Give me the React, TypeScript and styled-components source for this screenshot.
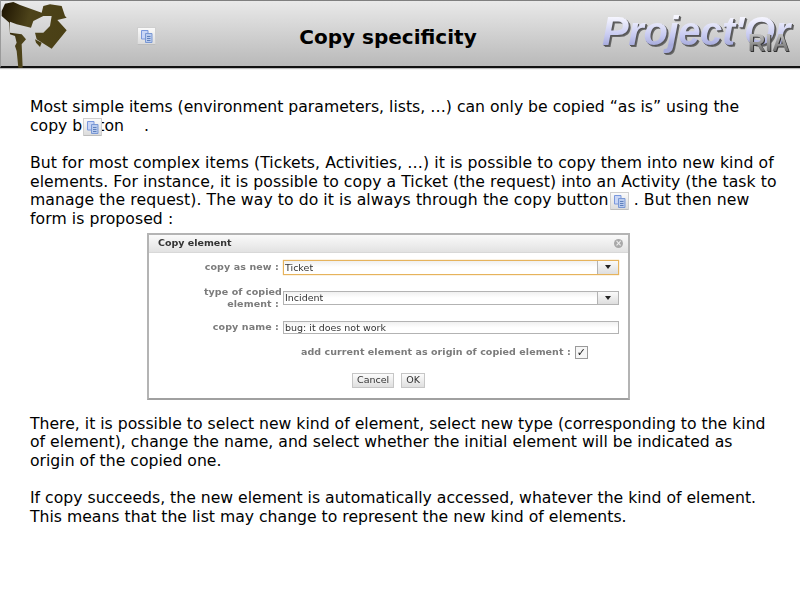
import React from "react";
import styled, { createGlobalStyle } from "styled-components";

const Global = createGlobalStyle`
  html, body { margin: 0; padding: 0; background: #fff; }
  body { font-family: "DejaVu Sans", Verdana, sans-serif; color: #000; }
`;

const Slide = styled.div`
  width: 800px;
  height: 600px;
  overflow: hidden;
  background: #fff;
`;

const Header = styled.header`
  height: 68px;
  box-sizing: border-box;
  display: flex;
  align-items: stretch;
  background: linear-gradient(#e9e9e9, #b9b9b9);
  border-top: 1px solid #7f7f7f;
  border-left: 1px solid #9a9a9a;
  border-bottom: 2px solid #111;
  box-shadow: 0 1px 1px #bbb;
`;

const LeftGroup = styled.div`
  width: 175px;
  display: flex;
  align-items: flex-start;
`;

const Spot = styled.svg`
  width: 70px;
  height: 67px;
  margin-left: -1px;
  flex: none;
`;

const HeaderTool = styled.div`
  margin: 26px 0 0 67px;
`;

const Title = styled.h1`
  flex: 1;
  margin: 0;
  padding-top: 24px;
  text-align: center;
  font: bold 20px/25px "DejaVu Sans", sans-serif;
  color: #000;
`;

const Brand = styled.div`
  position: relative;
  width: 200px;
  flex: none;
`;

const BrandName = styled.span`
  position: absolute;
  left: 2px;
  top: 7px;
  padding-right: 4px;
  font: italic bold 40px/46px "Liberation Sans", sans-serif;
  letter-spacing: -0.4px;
  white-space: nowrap;
  background: linear-gradient(#f6f6ff 20%, #c6c9f0 60%, #a9addd 80%);
  -webkit-background-clip: text;
  background-clip: text;
  color: transparent;
  filter: drop-shadow(1px 1px 0 #555) drop-shadow(1px 1px 0.5px #666);
`;

const BrandTag = styled.span`
  position: absolute;
  left: 148px;
  top: 28px;
  font: bold 24px/28px "Liberation Sans", sans-serif;
  background: linear-gradient(#bdbdbd 20%, #6d6d6d 80%);
  -webkit-background-clip: text;
  background-clip: text;
  color: transparent;
  filter: drop-shadow(1px 1px 0 #333);
`;

const Body = styled.main`
  padding: 30px 0 0 30px;
  font-size: 15.67px;
  line-height: 18.67px;
  white-space: nowrap;
`;

const Para = styled.p<{ $tight?: boolean; $track?: number }>`
  margin: 0 0 ${(p) => (p.$tight ? 0 : 18.67)}px;
  letter-spacing: ${(p) => p.$track ?? 0}px;
`;

const Anchor = styled.span`
  position: relative;
  display: inline-block;
  width: 0;
  height: 0;
`;

const Floating = styled.span<{ $left: number; $top: number }>`
  position: absolute;
  left: ${(p) => p.$left}px;
  top: ${(p) => p.$top}px;
`;

const ToolBtn = styled.span`
  display: block;
  width: 19px;
  height: 18px;
  box-sizing: border-box;
  border: 1px solid #cfcfcf;
  border-bottom-color: #bdbdbd;
  border-radius: 1px;
  background: linear-gradient(#fafafa, #dcdcdc);
  line-height: 0;
`;

const CopySvg = styled.svg`
  width: 17px;
  height: 16px;
  display: block;
`;

const CopyIcon = () => (
  <ToolBtn>
    <CopySvg viewBox="0 0 17 16">
      <path d="M3.500 2.500h6.500v8.500H3.500z" fill="#c9d6f6" stroke="#7a98dc" />
      <path d="M7.500 5.500h6.500v9H7.500z" fill="#b9cbee" stroke="#7a98d4" />
      <path d="M9 8.500h3.500M9 10.500h3.500M9 12.500h3.500" stroke="#5f80bc" />
    </CopySvg>
  </ToolBtn>
);

const Figure = styled.div`
  width: 483px;
  margin: 4px 0 15px 117px;
`;

const Dialog = styled.div`
  width: 483px;
  height: 167px;
  box-sizing: border-box;
  border: 2px solid #b4b4b4;
  border-bottom-color: #a0a0a0;
  background: #fff;
  font-size: 9.500px;
  line-height: 12px;
  filter: blur(0.25px);
`;

const DialogBar = styled.div`
  height: 17px;
  display: flex;
  align-items: center;
  justify-content: space-between;
  padding: 0 5px 0 9px;
  background: linear-gradient(#fafafa, #e2e2e2);
  border-bottom: 1px solid #d8d8d8;
  font-weight: bold;
  color: #333;
`;

const CloseDot = styled.span`
  width: 9px;
  height: 9px;
  border-radius: 50%;
  background: #a9a9a9;
  color: #eee;
  font: bold 8px/9px "DejaVu Sans", sans-serif;
  text-align: center;
`;

const Form = styled.div`
  display: flex;
  flex-direction: column;
  padding-top: 7px;
`;

const Row = styled.div<{ $h: number; $gap: number }>`
  display: grid;
  grid-template-columns: 130px 336px;
  grid-template-rows: ${(p) => p.$h}px;
  column-gap: 4px;
  align-items: center;
  margin-bottom: ${(p) => p.$gap}px;
`;

const Label = styled.label`
  text-align: right;
  font-weight: bold;
  color: #7b7b7b;
  letter-spacing: 0.1px;
`;

const LabelOverhang = styled.span`
  display: inline-block;
  margin-right: -3px;
`;

const Field = styled.div<{ $focus?: boolean; $h: number }>`
  height: ${(p) => p.$h}px;
  box-sizing: border-box;
  display: flex;
  align-items: stretch;
  border: 1px solid ${(p) => (p.$focus ? "#e6b35c" : "#b3b3b3")};
  box-shadow: ${(p) => (p.$focus ? "0 0 1px #e6b35c" : "none")};
  background: linear-gradient(#f0f0f0, #fff 6px);
  color: #333;
  padding-left: 1px;
  line-height: 11px;
`;

const FieldText = styled.span`
  flex: 1;
  align-self: center;
`;

const Arrow = styled.span`
  width: 20px;
  display: flex;
  align-items: center;
  justify-content: center;
  border-left: 1px solid #b3b3b3;
  background: linear-gradient(#fafafa, #dedede);
  &::after {
    content: "";
    border-left: 3px solid transparent;
    border-right: 3px solid transparent;
    border-top: 4px solid #222;
  }
`;

const CheckRow = styled.div`
  display: flex;
  align-items: center;
  gap: 4px;
  margin: 12px 0 0 152px;
  height: 13px;
  font-weight: bold;
  color: #7b7b7b;
  letter-spacing: 0.06px;
`;

const Check = styled.span`
  width: 13px;
  height: 13px;
  box-sizing: border-box;
  border: 1px solid #9a9a9a;
  background: #f6f6f6;
  color: #222;
  font-size: 11px;
  line-height: 11px;
  text-align: center;
`;

const Actions = styled.div`
  display: flex;
  gap: 7px;
  margin: 14px 0 0 203px;
`;

const DlgButton = styled.button`
  height: 15px;
  padding: 0 4px;
  box-sizing: border-box;
  border: 1px solid #c6c6c6;
  background: linear-gradient(#fcfcfc, #dfdfdf);
  font: 9.500px/12px "DejaVu Sans", sans-serif;
  color: #333;
`;

export default function App() {
  return (
    <Slide>
      <Global />
      <Header>
        <LeftGroup>
          <Spot viewBox="0 0 210 201">
            <defs>
              <linearGradient id="spot" x1="0" y1="0" x2="1" y2="0.3">
                <stop offset="0" stopColor="#1c1200" />
                <stop offset="0.45" stopColor="#4d431a" />
                <stop offset="1" stopColor="#4a4015" />
              </linearGradient>
            </defs>
            <path
              fill="url(#spot)"
              d="M5 30 15 8 40 3 60 12 125 35 130 15 150 10 185 15 195 45 200 50 172 57 200 88 155 143 110 115 105 95 130 95 150 75 155 45 130 45 100 60 93 80 50 70 30 62 30 95 65 100 78 115 65 130 68 200 55 200 50 150 45 135 50 125 45 105 30 100 28 65 5 45Z"
            />
            <path fill="#4a4015" d="M105 115 125 125 120 138 108 125Z" />
          </Spot>
          <HeaderTool>
            <CopyIcon />
          </HeaderTool>
        </LeftGroup>
        <Title>Copy specificity</Title>
        <Brand>
          <BrandName>Project'Or</BrandName>
          <BrandTag>RIA</BrandTag>
        </Brand>
      </Header>
      <Body>
        <Para>
          Most simple items (environment parameters, lists, …) can only be copied “as is” using the
          <br />
          copy b
          <Anchor>
            <Floating $left={1} $top={-13}>
              <CopyIcon />
            </Floating>
          </Anchor>
          utton &nbsp;&nbsp;&nbsp;.
        </Para>
        <Para $tight $track={0.065}>
          But for most complex items (Tickets, Activities, …) it is possible to copy them into new kind of
          <br />
          elements. For instance, it is possible to copy a Ticket (the request) into an Activity (the task to
          <br />
          manage the request). The way to do it is always through the copy button
          <Anchor>
            <Floating $left={1} $top={-13}>
              <CopyIcon />
            </Floating>
          </Anchor>
          &nbsp;&nbsp;&nbsp;&nbsp;&nbsp;. But then new
          <br />
          form is proposed :
        </Para>
        <Figure>
          <Dialog>
            <DialogBar>
              Copy element
              <CloseDot>×</CloseDot>
            </DialogBar>
            <Form>
              <Row $h={15} $gap={16}>
                <Label>copy as new :</Label>
                <Field $focus $h={15}>
                  <FieldText>Ticket</FieldText>
                  <Arrow />
                </Field>
              </Row>
              <Row $h={14} $gap={16}>
                <Label>
                  <LabelOverhang>type of copied</LabelOverhang>
                  <br />
                  element :
                </Label>
                <Field $h={14}>
                  <FieldText>Incident</FieldText>
                  <Arrow />
                </Field>
              </Row>
              <Row $h={13} $gap={0}>
                <Label>copy name :</Label>
                <Field $h={13}>
                  <FieldText>bug: it does not work</FieldText>
                </Field>
              </Row>
              <CheckRow>
                add current element as origin of copied element :
                <Check>✓</Check>
              </CheckRow>
              <Actions>
                <DlgButton>Cancel</DlgButton>
                <DlgButton>OK</DlgButton>
              </Actions>
            </Form>
          </Dialog>
        </Figure>
        <Para>
          There, it is possible to select new kind of element, select new type (corresponding to the kind
          <br />
          of element), change the name, and select whether the initial element will be indicated as
          <br />
          origin of the copied one.
        </Para>
        <Para>
          If copy succeeds, the new element is automatically accessed, whatever the kind of element.
          <br />
          This means that the list may change to represent the new kind of elements.
        </Para>
      </Body>
    </Slide>
  );
}
